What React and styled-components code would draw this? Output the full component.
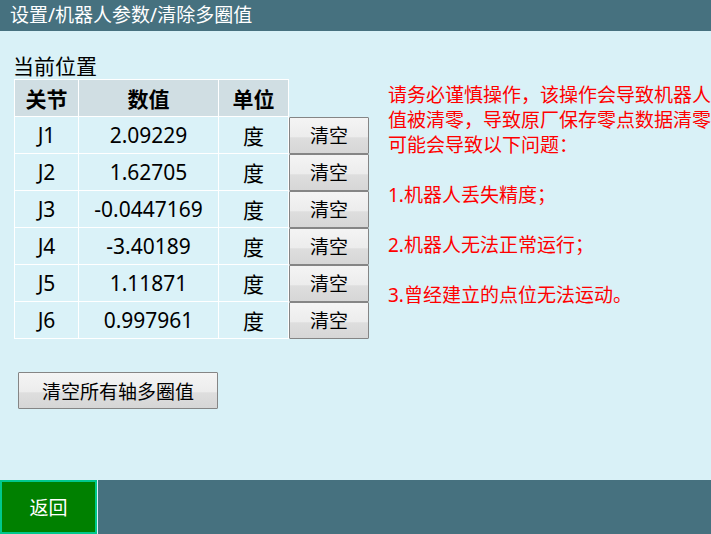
import React from 'react';
import styled, { createGlobalStyle } from 'styled-components';

const GlobalStyle = createGlobalStyle`
  html, body {
    margin: 0;
    padding: 0;
    background: #d9f1f7;
  }
  body {
    font-family: "Noto Sans", "Noto Sans CJK SC", sans-serif;
  }
`;

const Page = styled.div`
  width: 711px;
  height: 534px;
  display: flex;
  flex-direction: column;
  overflow: hidden;
  background: #d9f1f7;
`;

const TitleBar = styled.div`
  height: 31px;
  flex: none;
  background: #46717f;
  color: #ffffff;
  font-size: 19px;
  line-height: 31px;
  padding-left: 10px;
  white-space: nowrap;
`;

const Main = styled.div`
  flex: 1;
  display: flex;
  min-height: 0;
`;

const LeftPane = styled.div`
  width: 374px;
  flex: none;
  padding: 22px 0 0 14px;
  box-sizing: border-box;
`;

const Label = styled.div`
  font-size: 21px;
  line-height: 26px;
  color: #000;
  margin-left: -1px;
`;

const Table = styled.table`
  border-collapse: collapse;
  table-layout: fixed;
  font-size: 21px;
  color: #000;
`;

const Th = styled.th`
  height: 36px;
  padding: 0;
  border: 1px solid #ffffff;
  background: #d0dee3;
  font-weight: bold;
  text-align: center;
  width: ${p => p.$w}px;
`;

const Td = styled.td`
  height: 36px;
  padding: 0;
  border: 1px solid #ffffff;
  background: #daf2f8;
  text-align: center;
  white-space: nowrap;
`;

const BlankCell = styled.td`
  padding: 0;
  border: none;
  width: 80px;
  background: transparent;
`;

const BlankHead = styled.th`
  padding: 0;
  border: none;
  width: 80px;
`;

const GrayButton = styled.button`
  display: block;
  box-sizing: border-box;
  width: ${p => p.$w}px;
  height: ${p => p.$h}px;
  padding: 0;
  border: 1px solid #858585;
  border-radius: 1px;
  background: linear-gradient(#f4f4f4 0%, #ececec 55%, #dedede 56%, #d6d6d6 100%);
  font-family: "Noto Sans", "Noto Sans CJK SC", sans-serif;
  font-size: 19px;
  color: #000;
  cursor: pointer;
`;

const ClearAllWrap = styled.div`
  margin: 33px 0 0 4px;
`;

const Notice = styled.div`
  flex: 1;
  padding: 52px 0 0 14px;
  color: #ff0000;
  font-size: 19px;
  line-height: 25px;
  overflow: hidden;
`;

const NoticeLine = styled.div`
  white-space: nowrap;
  min-height: 25px;
`;

const Footer = styled.div`
  height: 54px;
  flex: none;
  display: flex;
  gap: 1px;
`;

const BackButton = styled.button`
  width: 97px;
  height: 54px;
  box-sizing: border-box;
  border: 2px solid #00c88c;
  background: #008000;
  color: #ffffff;
  font-family: "Noto Sans", "Noto Sans CJK SC", sans-serif;
  font-size: 19px;
  padding: 0;
  cursor: pointer;
`;

const FooterFill = styled.div`
  flex: 1;
  background: #46717f;
`;

const joints = [
  { name: 'J1', value: '2.09229' },
  { name: 'J2', value: '1.62705' },
  { name: 'J3', value: '-0.0447169' },
  { name: 'J4', value: '-3.40189' },
  { name: 'J5', value: '1.11871' },
  { name: 'J6', value: '0.997961' },
];

const notice = [
  '请务必谨慎操作，该操作会导致机器人多圈',
  '值被清零，导致原厂保存零点数据清零，',
  '可能会导致以下问题：',
  '',
  '1.机器人丢失精度；',
  '',
  '2.机器人无法正常运行；',
  '',
  '3.曾经建立的点位无法运动。',
];

export default function App() {
  return (
    <Page>
      <GlobalStyle />
      <TitleBar>设置/机器人参数/清除多圈值</TitleBar>
      <Main>
        <LeftPane>
          <Label>当前位置</Label>
          <Table>
            <thead>
              <tr>
                <Th $w={63}>关节</Th>
                <Th $w={139}>数值</Th>
                <Th $w={69}>单位</Th>
                <BlankHead />
              </tr>
            </thead>
            <tbody>
              {joints.map(j => (
                <tr key={j.name}>
                  <Td>{j.name}</Td>
                  <Td>{j.value}</Td>
                  <Td>度</Td>
                  <BlankCell>
                    <GrayButton $w={80} $h={37}>清空</GrayButton>
                  </BlankCell>
                </tr>
              ))}
            </tbody>
          </Table>
          <ClearAllWrap>
            <GrayButton $w={200} $h={37}>清空所有轴多圈值</GrayButton>
          </ClearAllWrap>
        </LeftPane>
        <Notice>
          {notice.map((line, i) => (
            <NoticeLine key={i}>{line}</NoticeLine>
          ))}
        </Notice>
      </Main>
      <Footer>
        <BackButton>返回</BackButton>
        <FooterFill />
      </Footer>
    </Page>
  );
}
